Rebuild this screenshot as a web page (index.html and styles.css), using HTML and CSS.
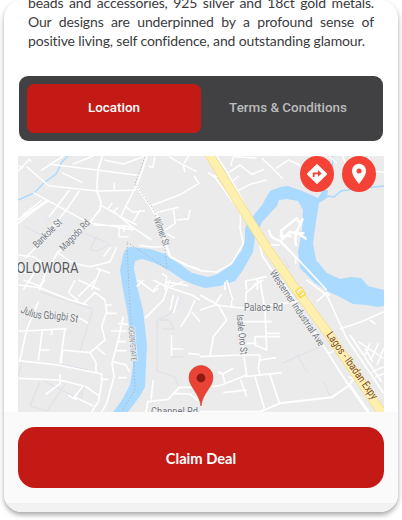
FILE: index.html
```html
<!DOCTYPE html>
<html lang="en">
<head>
<meta charset="utf-8">
<title>Deal details</title>
<link rel="stylesheet" href="styles.css">
</head>
<body>
<main class="card">
  <section class="about">
    <p class="line">beads and accessories, 925 silver and 18ct gold metals.</p>
    <p class="line">Our designs are underpinned by a profound sense of</p>
    <p class="line line-last">positive living, self confidence, and outstanding glamour.</p>
  </section>
  <nav class="tabs">
    <button class="tab tab-active"><span>Location</span></button>
    <button class="tab"><span>Terms &amp; Conditions</span></button>
  </nav>
  <section class="map">
    <svg class="map-art" viewBox="18 156 366 256" width="366" height="256">
      <rect x="18" y="156" width="366" height="256" fill="#ebebeb"/>
      <path fill="#e8eaed" d="M66 213L80 224 66 239 53 229zM41 217l10-5 4 6-8 6zM171 300l8-5 8 8-5 7-8-2z"/>
      <!-- river and streams -->
      <path fill="#aadaff" d="M113 412L122 400 130 385 133 365 131 340 127 310 123 290 120 270 123 255Q125 248 130 247L150 249 165 254 180 264 192 273 200 275 208 277 218 274 231 265 242 250 245 240 245 228 250 220 262 205 270 191 280 187 288 186 300 190 318 198 323 190 328 190 327 198 319 203 316 222 313 243 316 260 327 273 340 279 350 277 361 278 368 286 384 290V306L377 307 367 305 353 304 338 296 327 291 315 283 300 268 298 252 302 230 303 210 298 201 287 199 279 200 277 206 262 222 255 238 253 252 243 270 235 281 220 286 205 288 195 285 183 280 170 271 155 263 142 259 135 261 134 268 138 290 143 310 147 345 145 387 140 396 128 412z"/>
      <g fill="none" stroke="#aadaff">
        <path stroke-width="1.4" d="M68 156L62 162 56 174 45 182 34 193 18 200"/>
        <path stroke-width="1.6" d="M318 202L328 196 334 197 341 191 354 189 384 186M332 156l1 6-2 10"/>
      </g>
      <!-- faint lanes -->
      <g fill="none" stroke="#dfe2e8" stroke-width="1.3">
        <path d="M25 226L46 238M76 230L108 243M97 236L90 249 97 251 111 244M40 292L93 309 80 351M63 350L60 364 88 370M84 386L81 400 44 381M65 384L47 411 30 406 40 382M22 362L18 376M82 386L78 401"/>
        <path d="M160 320h9l5 9-11 0M178 300l-7 13-14 8 0 50 18 6 3 9M172 333v24h11M226 283l7 21M283 363L319 347M297 355l10 17M324 382l6 14M289 268l-5-10"/>
      </g>
      <!-- roads, north-west quarter -->
      <g fill="none" stroke="#fff" stroke-width="4.6" stroke-linejoin="round" transform="translate(0 150) scale(.33333)">
        <path stroke-width="5.5" d="M307 18L294 60 290 122 303 155 300 178 270 218 240 240 200 280 172 310 140 360 118 420M440 18L430 52 409 108"/>
        <path d="M55 63L88 28 94 35M55 47l15 7M80 50L145 107 292 123 408 121M123 62L151 43 190 18M150 43L297 61 420 77M185 68L248 98M218 43L280 18M312 30L370 42 436 18M343 98V121M445 48l13 5 7-33M507 20L547 43 590 65M552 40l14-22M550 47l5 20"/>
        <path d="M100 128L265 218 347 230 400 240M142 150L54 210M126 150L68 195M208 121L178 160 148 200M238 123L200 178 120 280 75 325M148 150L105 180 55 220M303 166L350 192 398 232 455 270M280 225L375 227 408 237M357 225v35h29M372 225v22M325 175l12-16M340 185l15-12M408 108L362 200 410 225M377 170l23 17 35-5M400 215l20-35M456 166L540 134 597 100 582 78"/>
        <path stroke-width="6.5" d="M409 108L455 175 480 210 497 280 510 320 560 346 600 360"/>
        <path d="M463 190L500 180 536 172M520 175l6 45-30 20M530 210l35-3 5-28M500 250l25 15M418 286L450 291 500 290M55 315L100 320 123 335 70 420M55 350L78 370M170 305L220 340 270 350 330 335 350 292M300 360l-25 60M310 320l22-28M290 355l40 14M235 390L300 420M430 390l-20 20M485 370l15 10-5 40M480 400l-20 20M500 395l65 12"/>
      </g>
      <!-- roads, north-east quarter -->
      <g fill="none" stroke="#fff" stroke-width="4.6" stroke-linejoin="round" transform="translate(200 150) scale(.33333)">
        <path d="M50 18L80 65 122 140 140 175M24 68L45 82 122 188 120 235 130 280 95 340 50 366 0 362M35 75L75 85 98 95M92 48L100 20 170 24M85 68L120 45 155 73 193 58M95 95l22-17M115 122L150 103 200 90M185 24L215 52 248 86M228 55L265 30 300 45M428 18l15 40M507 18v44l44 5M390 20l20 20"/>
        <path stroke-width="5" d="M240 285H180L187 318 215 360 245 400M240 275L265 300 287 323V342M380 420L240 270M75 420V395M140 420L137 393 200 380M172 420V388"/>
        <path stroke-width="7.5" stroke-linecap="round" d="M208 242Q208 265 241 273M290 205L243 242 247 268 270 245 285 250 310 250M242 258l30 0M288 285Q282 260 295 235L308 208M293 210l10 12M285 245l32 20"/>
      </g>
      <!-- roads, south-west quarter -->
      <g fill="none" stroke="#fff" stroke-width="5" stroke-linejoin="round" transform="translate(0 280) scale(.33333)">
        <path d="M55 15L115 22 205 58 262 75M70 0l55 20M135 0L115 23M225 0L205 40M235 50L285 0M210 42l25 20M250 72L285 37 315 60 320 95 305 140 315 180 270 218 188 210 183 250M270 218l18 30 0 30M290 203l25 20M315 75h20M320 100h30M55 153H80L200 146M115 65L80 150 60 240M127 150L115 242M155 150v15M118 210h30M195 145L180 250M232 110l33 20M55 242L175 255 305 282V310L295 365 275 396M55 295L180 300 250 318 222 352M180 283v28L137 343M255 318L300 350M222 350L280 378M205 346l25 14M307 298h18M370 110L355 180 336 248 342 290 320 370 305 396M355 130l28 3M333 153H380M350 185h28M345 212h35M338 245l40 10 10 20M355 293h25"/>
        <path d="M510 0L490 60 435 115M413 0L460 35 475 25M460 0L500 20 575 45 600 60M510 20L550 5M520 45l-10 45M535 50l-15 50M585 60L565 105 542 140M575 95l25 30M515 165V228M515 207h35M565 220l35 4M438 396L443 365 505 358 538 322H580M460 300L453 358M520 340l50 2 25 20"/>
      </g>
      <!-- roads, south-east quarter -->
      <g fill="none" stroke="#fff" stroke-width="5" stroke-linejoin="round" transform="translate(200 280) scale(.33333)">
        <path d="M0 45L55 75 80 120 40 170 30 228M80 0l18 60M0 90L45 75 135 85 330 60M45 73l20-30M95 60V78M138 75V38L185 0M160 15l30-15M180 0L195 90 200 210 165 195V170H240M130 125h85M195 160h45M140 190H170M0 230L125 225 180 225 175 265 180 285M180 240l48-7M118 130L140 285 65 315 38 320M135 290L245 278M75 312L68 282 100 265M55 275l15 10M122 300l18 50M70 338l70-8M165 290L193 385M210 285L238 370"/>
        <path stroke-width="6" d="M0 395H180L240 370 395 352 445 318 465 290"/>
        <path d="M245 0L445 315M350 65l30-27 10 10M320 0L380 45 440 175 551 340M420 147L490 123 551 95M510 120l16 12M450 165L545 305M475 185L550 235M495 205l23 40M510 190l-15 35M535 190l-23 50M551 205l-20 50M515 275l36-15M525 290l26-9M385 220l20-10M445 290l30 10"/>
        <path stroke-width="9" d="M445 310L505 396"/>
      </g>
      <path d="M209 154L245 213 267 248 297 291 328 333 384 416" fill="none" stroke="#f4dd9b" stroke-width="9.4"/>
      <path d="M209 154L245 213 267 248 297 291 328 333 384 416" fill="none" stroke="#fff0ad" stroke-width="7.8"/>
      <path d="M145 157L135 184 155 212 165 250 167 269 127 242 129 290 134 365 135 390 122 411" fill="none" stroke="#afb3b8" stroke-width="1" stroke-dasharray="1.3 2"/>
      <!-- labels -->
      <g class="labels">
        <text class="district" x="16.500" y="273" textLength="62" lengthAdjust="spacingAndGlyphs">OLOWORA</text>
        <text transform="translate(37 248.500) rotate(-45)" textLength="36" lengthAdjust="spacingAndGlyphs">Bankole St</text>
        <text transform="translate(63.500 251.500) rotate(-46)" textLength="39" lengthAdjust="spacingAndGlyphs">Magodo Rd</text>
        <text transform="translate(153.500 219) rotate(70)" textLength="29" lengthAdjust="spacingAndGlyphs">Wilmer St</text>
        <path id="julius" fill="none" d="M20 312Q32 319 46 319T79 323"/>
        <text class="label-lg"><textPath href="#julius" textLength="59" lengthAdjust="spacingAndGlyphs">Julius Gbigbi St</textPath></text>
        <text class="state" transform="translate(128.500 327) rotate(86)" textLength="34" lengthAdjust="spacingAndGlyphs">OGUN STATE</text>
        <text class="label-lg" x="244" y="311" textLength="39" lengthAdjust="spacingAndGlyphs">Palace Rd</text>
        <text transform="translate(236.500 315) rotate(84)" textLength="40" lengthAdjust="spacingAndGlyphs">Isale Oro St</text>
        <text transform="translate(269.500 273) rotate(56)" textLength="89" lengthAdjust="spacingAndGlyphs">Westerner Industrial Ave</text>
        <text class="highway" transform="translate(326 335) rotate(54.500)" textLength="80" lengthAdjust="spacingAndGlyphs">Lagos - Ibadan Expy</text>
        <text x="151" y="415" textLength="47" lengthAdjust="spacingAndGlyphs">Channel Rd</text>
      </g>
      <rect x="-4.800" y="-3.900" width="9.600" height="7.800" rx="1.500" fill="#fbd54b" transform="translate(300.500 292.500) rotate(56)"/>
      <text class="shield" transform="translate(296.800 290.800) rotate(56)">E1</text>
      <!-- destination marker -->
      <path d="M201 406C199.500 393 189 387 189 377.500A12 12 0 0 1 213 377.500C213 387 202.500 393 201 406z" fill="#ea4335" stroke="#cf3a2e" stroke-width=".6"/>
      <circle cx="201" cy="378" r="4.400" fill="#8b1a13"/>
    </svg>
    <div class="map-actions">
      <button class="round" aria-label="Directions">
        <svg viewBox="0 0 34 36" width="34" height="36"><path d="M17 8.600L26.500 18 17 27.400 7.500 18z" fill="#fff" stroke="#fff" stroke-width="1.200" stroke-linejoin="round"/><path d="M13.700 20.900V17.400H19" fill="none" stroke="#f44336" stroke-width="1.800"/><path d="M18 14.100L21.700 17.400 18 20.700z" fill="#f44336"/></svg>
      </button>
      <button class="round" aria-label="Show place">
        <svg viewBox="0 0 34 36" width="34" height="36"><path d="M17 28C14 24 10 19.500 10 14.800A7 7 0 0 1 24 14.800C24 19.500 20 24 17 28z" fill="#fff"/><circle cx="17" cy="15" r="2.500" fill="#f44336"/></svg>
      </button>
    </div>
  </section>
  <footer class="footer">
    <button class="claim">Claim Deal</button>
  </footer>
</main>
</body>
</html>
```

FILE: styles.css
```css
* { box-sizing: border-box; }
body {
  margin: 0;
  height: 520px;
  overflow: hidden;
  background: #fff;
  font-family: Roboto, "Liberation Sans", sans-serif;
}
button {
  border: 0;
  padding: 0;
  background: none;
  font: inherit;
}
.card {
  width: 394px;
  height: 512px;
  margin-left: 4px;
  display: flex;
  flex-direction: column;
  overflow: hidden;
  border-radius: 18px;
  background: #fff;
  box-shadow: 0 3px 5px rgba(0, 0, 0, .34);
}
.about {
  height: 76px;
  flex: none;
  padding: 0 24px;
  margin-top: -7px;
  font-family: Lato, sans-serif;
  font-size: 14px;
  line-height: 19.2px;
  letter-spacing: -.15px;
  color: #3b3b3d;
}
.line {
  margin: 0;
  white-space: nowrap;
  text-align: justify;
  text-align-last: justify;
}
.line-last { width: 337px; }
.tabs {
  flex: none;
  display: flex;
  width: 364px;
  height: 65px;
  margin: 7px 0 0 15px;
  padding: 8px;
  border-radius: 9px;
  background: #414143;
}
.tab {
  flex: 1;
  height: 49px;
  padding-bottom: 2px;
  border-radius: 7px;
  font-size: 13.4px;
  font-weight: 500;
  color: #bcbcbd;
}
.tab-active {
  background: #c41a15;
  color: #fff;
}
.map {
  position: relative;
  flex: none;
  width: 366px;
  height: 256px;
  margin: 15px 0 0 14px;
  overflow: hidden;
}
.map-art { display: block; }
.map-actions {
  position: absolute;
  top: 0;
  right: 8px;
  display: flex;
  gap: 8px;
}
.round {
  width: 34px;
  height: 36px;
  border-radius: 50%;
  background: #f44336;
}
.round svg { display: block; }
.labels {
  font-size: 10px;
  fill: #70767d;
  stroke: #f3f3f3;
  stroke-width: 1.4px;
  paint-order: stroke;
}
.labels path { stroke: none; }
.labels .label-lg { font-size: 11px; }
.labels .district { font-size: 15px; fill: #55595e; }
.labels .state { font-size: 8px; fill: #8b9299; }
.labels .highway {
  font-size: 11px;
  fill: #7a4a24;
  stroke: #fff3c4;
}
.shield {
  font-size: 7px;
  font-weight: 700;
  fill: #fff;
}
.footer {
  flex: 1;
  padding: 15px 14px 0;
  background: linear-gradient(#fafafa 91px, #f2f2f2 91px);
}
.claim {
  display: block;
  width: 366px;
  height: 61px;
  border-radius: 17px;
  background: #c41a15;
  color: #fff;
  font-family: Lato, sans-serif;
  font-size: 14.700px;
  font-weight: 700;
}
```
